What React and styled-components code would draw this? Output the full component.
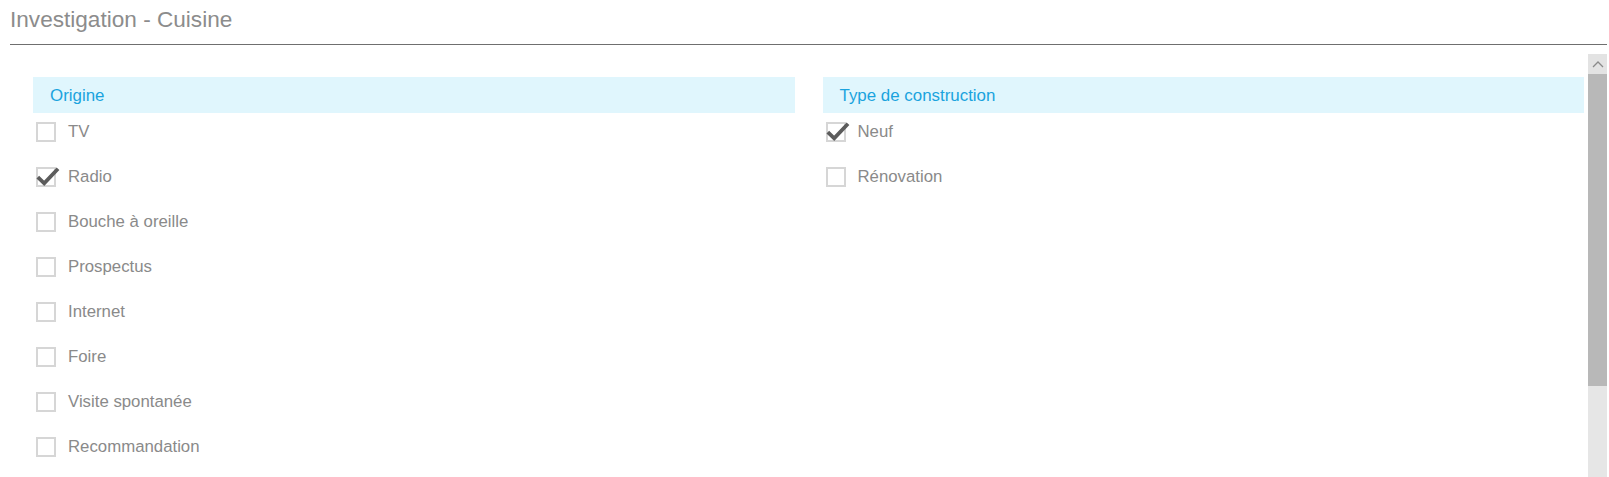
import React from "react";
import styled, { createGlobalStyle } from "styled-components";

const GlobalStyle = createGlobalStyle`
  html, body {
    margin: 0;
    padding: 0;
    background: #ffffff;
    font-family: "Liberation Sans", Arial, sans-serif;
    overflow: hidden;
  }
`;

const origines = [
  { label: "TV", checked: false },
  { label: "Radio", checked: true },
  { label: "Bouche à oreille", checked: false },
  { label: "Prospectus", checked: false },
  { label: "Internet", checked: false },
  { label: "Foire", checked: false },
  { label: "Visite spontanée", checked: false },
  { label: "Recommandation", checked: false },
];

const constructions = [
  { label: "Neuf", checked: true },
  { label: "Rénovation", checked: false },
];

function CheckBox({ checked }) {
  return (
    <Box>
      {checked && (
        <Tick viewBox="0 0 24 24">
          <path d="M1.8 12.2 L8.2 18.4 L22 3.8" />
        </Tick>
      )}
    </Box>
  );
}

function Group({ title, items }) {
  return (
    <Column>
      <GroupTitle>{title}</GroupTitle>
      <List>
        {items.map((item) => (
          <Row key={item.label}>
            <CheckBox checked={item.checked} />
            <Label>{item.label}</Label>
          </Row>
        ))}
      </List>
    </Column>
  );
}

export default function App() {
  return (
    <Page>
      <GlobalStyle />
      <Header>
        <Title>Investigation - Cuisine</Title>
      </Header>
      <ScrollArea>
        <Content>
          <Group title="Origine" items={origines} />
          <Group title="Type de construction" items={constructions} />
        </Content>
        <Scrollbar>
          <ScrollButton>
            <svg width="12" height="8" viewBox="0 0 12 8">
              <path d="M1 7 L6 2 L11 7" fill="none" stroke="#8a8a8a" strokeWidth="1.3" />
            </svg>
          </ScrollButton>
          <Thumb />
          <Track />
        </Scrollbar>
      </ScrollArea>
    </Page>
  );
}

const Page = styled.div`
  width: 1609px;
  height: 477px;
  overflow: hidden;
`;

const Header = styled.div`
  margin: 0 2px 0 10px;
  padding: 7px 0 12px 0;
  border-bottom: 1px solid #6f6f6f;
`;

const Title = styled.h1`
  margin: 0;
  font-size: 22.6px;
  line-height: 25px;
  font-weight: normal;
  color: #8c8c8c;
`;

const ScrollArea = styled.div`
  display: flex;
  margin: 9px 2px 0 10px;
  height: 423px;
`;

const Content = styled.div`
  flex: 1;
  display: grid;
  grid-template-columns: 1fr 1fr;
  column-gap: 28px;
  align-items: start;
  padding: 23px 4px 0 23px;
`;

const Column = styled.div`
  display: flex;
  flex-direction: column;
`;

const GroupTitle = styled.div`
  height: 36px;
  line-height: 37px;
  padding-left: 17px;
  background: #e0f6fd;
  color: #1aa3de;
  font-size: 16.9px;
`;

const List = styled.div`
  display: flex;
  flex-direction: column;
  gap: 25px;
  padding: 9px 0 0 3px;
`;

const Row = styled.div`
  display: flex;
  align-items: center;
  height: 20px;
  gap: 12px;
`;

const Box = styled.span`
  position: relative;
  width: 20px;
  height: 20px;
  box-sizing: border-box;
  border: 2px solid #d6d6d6;
  background: #fff;
  flex-shrink: 0;
`;

const Tick = styled.svg`
  position: absolute;
  left: -2px;
  top: -4px;
  width: 24px;
  height: 24px;
  overflow: visible;

  path {
    fill: none;
    stroke: #5c5c5c;
    stroke-width: 3.8;
    stroke-linecap: butt;
    stroke-linejoin: miter;
  }
`;

const Label = styled.span`
  font-size: 16.8px;
  line-height: 20px;
  color: #8a8a8a;
`;

const Scrollbar = styled.div`
  width: 19px;
  display: flex;
  flex-direction: column;
  background: #e6e6e6;
`;

const ScrollButton = styled.div`
  height: 20px;
  display: flex;
  align-items: center;
  justify-content: center;
  background: #e3e3e3;
`;

const Thumb = styled.div`
  height: 312px;
  background: #b8b8b8;
`;

const Track = styled.div`
  flex: 1;
  background: #e6e6e6;
`;
